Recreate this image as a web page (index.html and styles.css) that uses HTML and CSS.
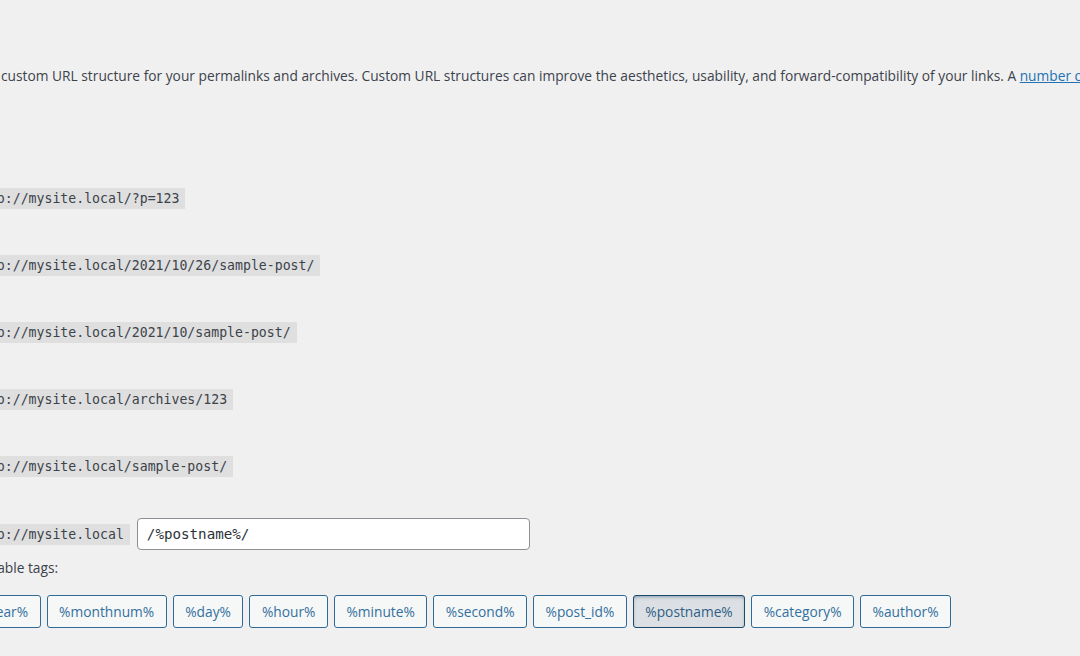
FILE: index.html
```html
<!DOCTYPE html>
<html lang="en">
<head>
    <meta charset="UTF-8">
    <title>Permalink Settings</title>
    <link rel="stylesheet" href="styles.css">
</head>
<body>

    <div class="wrap">
        <p class="intro">custom URL structure for your permalinks and archives. Custom URL structures can improve the aesthetics, usability, and forward-compatibility of your links. A <a href="#">number of tags are available</a>, and here are some examples to get you started.</p>

        <div class="structures">
            <div class="row"><code>http://mysite.local/?p=123</code></div>
            <div class="row"><code>http://mysite.local/2021/10/26/sample-post/</code></div>
            <div class="row"><code>http://mysite.local/2021/10/sample-post/</code></div>
            <div class="row"><code>http://mysite.local/archives/123</code></div>
            <div class="row"><code>http://mysite.local/sample-post/</code></div>

            <div class="custom">
                <div class="custom-line">
                    <code>http://mysite.local</code>
                    <input type="text" class="code" value="/%postname%/">
                </div>
                <div class="tags-label">Available tags:</div>
                <ul class="tags">
                    <li><button type="button">%year%</button></li>
                    <li><button type="button">%monthnum%</button></li>
                    <li><button type="button">%day%</button></li>
                    <li><button type="button">%hour%</button></li>
                    <li><button type="button">%minute%</button></li>
                    <li><button type="button">%second%</button></li>
                    <li><button type="button">%post_id%</button></li>
                    <li><button type="button" class="active">%postname%</button></li>
                    <li><button type="button">%category%</button></li>
                    <li><button type="button">%author%</button></li>
                </ul>
            </div>
        </div>
    </div>

</body>
</html>
```

FILE: styles.css
```css
html, body {
    overflow: hidden;
}

body {
    margin: 0;
    background-color: #f0f0f1;
    color: #3c434a;
    font-family: "Open Sans", sans-serif;
    font-size: 13.75px;
    white-space: nowrap;
}

a {
    color: #2271b1;
}

.wrap {
    width: 1080px;
    height: 656px;
}

.intro {
    margin: 0;
    padding: 66px 0 0 1px;
    line-height: 20px;
}

.structures {
    margin: 79px 0 0 -33px;
}

.row {
    height: 67px;
    display: flex;
    align-items: center;
}

code {
    font-family: "DejaVu Sans Mono", monospace;
    font-size: 13.2px;
    line-height: 16px;
    padding: 3px 6px 2px;
    background: rgba(0, 0, 0, 0.07);
}

.custom {
    padding-top: 18px;
}

.custom-line {
    display: flex;
    align-items: center;
    gap: 7px;
}

input.code {
    width: 393px;
    height: 32px;
    box-sizing: border-box;
    border: 1px solid #8c8f94;
    border-radius: 4px;
    padding: 0 9px;
    background: #fff;
    color: #2c3338;
    font-family: "DejaVu Sans Mono", monospace;
    font-size: 14.2px;
}

.tags-label {
    margin-top: 8px;
    line-height: 20px;
}

.tags {
    list-style: none;
    margin: 17px 0 0 -2px;
    padding: 0;
    display: flex;
    gap: 6px;
}

.tags button {
    height: 33px;
    padding: 0 11.5px;
    border: 1px solid #2f6b98;
    border-radius: 3px;
    background: #f6f7f7;
    color: #33709e;
    font-family: inherit;
    font-size: 13.75px;
    cursor: pointer;
}

.tags button.active {
    background: #dcdfe3;
    border-color: #1d4a6b;
    color: #2f5f85;
    box-shadow: inset 0 2px 5px -3px #1d4a6b;
}
```
